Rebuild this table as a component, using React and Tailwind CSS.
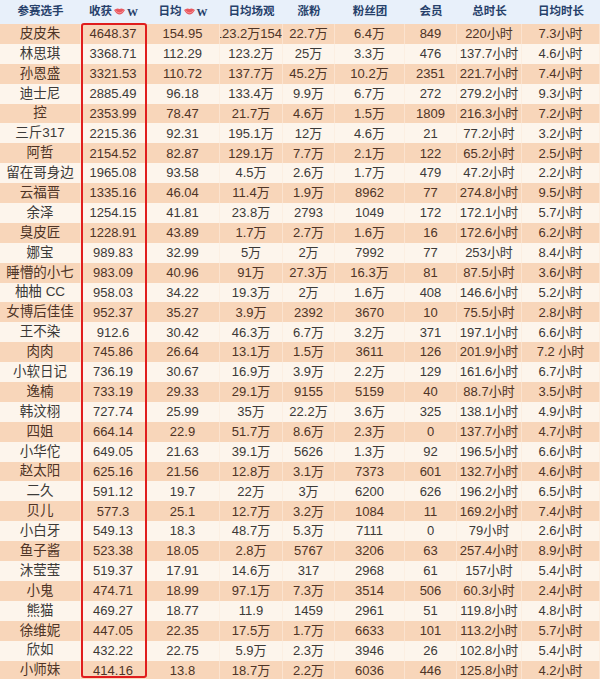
const cols = [
  { w: 'w-[81px]', label: '参赛选手' },
  { w: 'w-[65px]', label: '收获', melon: true },
  { w: 'w-[74px]', label: '日均', melon: true },
  { w: 'w-[63px]', label: '日均场观' },
  { w: 'w-[52px]', label: '涨粉' },
  { w: 'w-[70px]', label: '粉丝团' },
  { w: 'w-[52px]', label: '会员' },
  { w: 'w-[65px]', label: '总时长' },
  { w: 'w-[78px]', label: '日均时长' },
];

const rows = [
  ['皮皮朱', '4648.37', '154.95', '123.2万154', '22.7万', '6.4万', '849', '220小时', '7.3小时'],
  ['林思琪', '3368.71', '112.29', '123.2万', '25万', '3.3万', '476', '137.7小时', '4.6小时'],
  ['孙恩盛', '3321.53', '110.72', '137.7万', '45.2万', '10.2万', '2351', '221.7小时', '7.4小时'],
  ['迪士尼', '2885.49', '96.18', '133.4万', '9.9万', '6.7万', '272', '279.2小时', '9.3小时'],
  ['控', '2353.99', '78.47', '21.7万', '4.6万', '1.5万', '1809', '216.3小时', '7.2小时'],
  ['三斤317', '2215.36', '92.31', '195.1万', '12万', '4.6万', '21', '77.2小时', '3.2小时'],
  ['阿哲', '2154.52', '82.87', '129.1万', '7.7万', '2.1万', '122', '65.2小时', '2.5小时'],
  ['留在哥身边', '1965.08', '93.58', '4.5万', '2.6万', '1.7万', '479', '47.2小时', '2.2小时'],
  ['云福晋', '1335.16', '46.04', '11.4万', '1.9万', '8962', '77', '274.8小时', '9.5小时'],
  ['余泽', '1254.15', '41.81', '23.8万', '2793', '1049', '172', '172.1小时', '5.7小时'],
  ['臭皮匠', '1228.91', '43.89', '1.7万', '2.7万', '1.6万', '16', '172.6小时', '6.2小时'],
  ['娜宝', '989.83', '32.99', '5万', '2万', '7992', '77', '253小时', '8.4小时'],
  ['睡懵的小七', '983.09', '40.96', '91万', '27.3万', '16.3万', '81', '87.5小时', '3.6小时'],
  ['柚柚 CC', '958.03', '34.22', '19.3万', '2万', '1.6万', '408', '146.6小时', '5.2小时'],
  ['女博后佳佳', '952.37', '35.27', '3.9万', '2392', '3670', '10', '75.5小时', '2.8小时'],
  ['王不染', '912.6', '30.42', '46.3万', '6.7万', '3.2万', '371', '197.1小时', '6.6小时'],
  ['肉肉', '745.86', '26.64', '13.1万', '1.5万', '3611', '126', '201.9小时', '7.2 小时'],
  ['小软日记', '736.19', '30.67', '16.9万', '3.9万', '2.2万', '129', '161.6小时', '6.7小时'],
  ['逸楠', '733.19', '29.33', '29.1万', '9155', '5159', '40', '88.7小时', '3.5小时'],
  ['韩汶栩', '727.74', '25.99', '35万', '22.2万', '3.6万', '325', '138.1小时', '4.9小时'],
  ['四姐', '664.14', '22.9', '51.7万', '8.6万', '2.3万', '0', '137.7小时', '4.7小时'],
  ['小华佗', '649.05', '21.63', '39.1万', '5626', '1.3万', '92', '196.5小时', '6.6小时'],
  ['赵太阳', '625.16', '21.56', '12.8万', '3.1万', '7373', '601', '132.7小时', '4.6小时'],
  ['二久', '591.12', '19.7', '22万', '3万', '6200', '626', '196.2小时', '6.5小时'],
  ['贝儿', '577.3', '25.1', '12.7万', '3.2万', '1084', '11', '169.2小时', '7.4小时'],
  ['小白牙', '549.13', '18.3', '48.7万', '5.3万', '7111', '0', '79小时', '2.6小时'],
  ['鱼子酱', '523.38', '18.05', '2.8万', '5767', '3206', '63', '257.4小时', '8.9小时'],
  ['沐莹莹', '519.37', '17.91', '14.6万', '317', '2968', '61', '157小时', '5.4小时'],
  ['小鬼', '474.71', '18.99', '97.1万', '7.3万', '3514', '506', '60.3小时', '2.4小时'],
  ['熊猫', '469.27', '18.77', '11.9', '1459', '2961', '51', '119.8小时', '4.8小时'],
  ['徐维妮', '447.05', '22.35', '17.5万', '1.7万', '6633', '101', '113.2小时', '5.7小时'],
  ['欣如', '432.22', '22.75', '5.9万', '2.3万', '3946', '26', '102.8小时', '5.4小时'],
  ['小师妹', '414.16', '13.8', '18.7万', '2.2万', '6036', '446', '125.8小时', '4.2小时'],
];

function Melon() {
  return (
    <svg width="13" height="9" viewBox="0 0 13 9" className="mx-[1px]">
      <path d="M1 2 Q6.5 11 12 2 Q9 -0.5 6.5 1 Q4 -0.5 1 2 Z" fill="#e9585f" />
      <path d="M2.5 2.6 Q6.5 7 10.5 2.6" stroke="#f7a3a3" strokeWidth="0.8" fill="none" />
    </svg>
  );
}

export default function App() {
  return (
    <div
      className="relative w-[600px] h-[679px] overflow-hidden bg-[#fdf6ee]"
      style={{ fontFamily: '"Liberation Sans", "Noto Sans CJK SC", sans-serif' }}
    >
      <div className="flex h-[24px] bg-[#e8f0fa]">
        {cols.map((c, i) => (
          <div
            key={i}
            className={`${c.w} shrink-0 flex items-center justify-center text-[11.5px] font-bold text-[#26406a]`}
          >
            {c.label}
            {c.melon && (
              <>
                <Melon />
                <span className="text-[11px] font-bold" style={{ fontFamily: '"Liberation Serif", serif' }}>W</span>
              </>
            )}
          </div>
        ))}
      </div>

      {rows.map((r, ri) => {
        const odd = ri % 2 === 0;
        return (
          <div
            key={ri}
            className={`flex h-[19.9px] ${odd ? 'bg-[#f8d6ba] text-[#4e3426]' : 'bg-[#fdf5ec] text-[#3c3a38]'}`}
          >
            {r.map((v, ci) => (
              <div
                key={ci}
                className={`${cols[ci].w} shrink-0 flex items-center overflow-hidden whitespace-nowrap ${
                  ri === 0 && ci === 3 ? 'justify-end' : 'justify-center'
                } ${ci === 0 ? 'text-[13.5px]' : 'text-[13px]'} ${
                  odd ? 'border-r border-[#fbe3cf]' : 'border-r border-[#fcefe2]'
                }`}
              >
                {v}
              </div>
            ))}
          </div>
        );
      })}

      <div className="absolute left-[81px] top-[23px] w-[66px] h-[655px] border-2 border-[#e01e1e] rounded-[3px] pointer-events-none" />
    </div>
  );
}
